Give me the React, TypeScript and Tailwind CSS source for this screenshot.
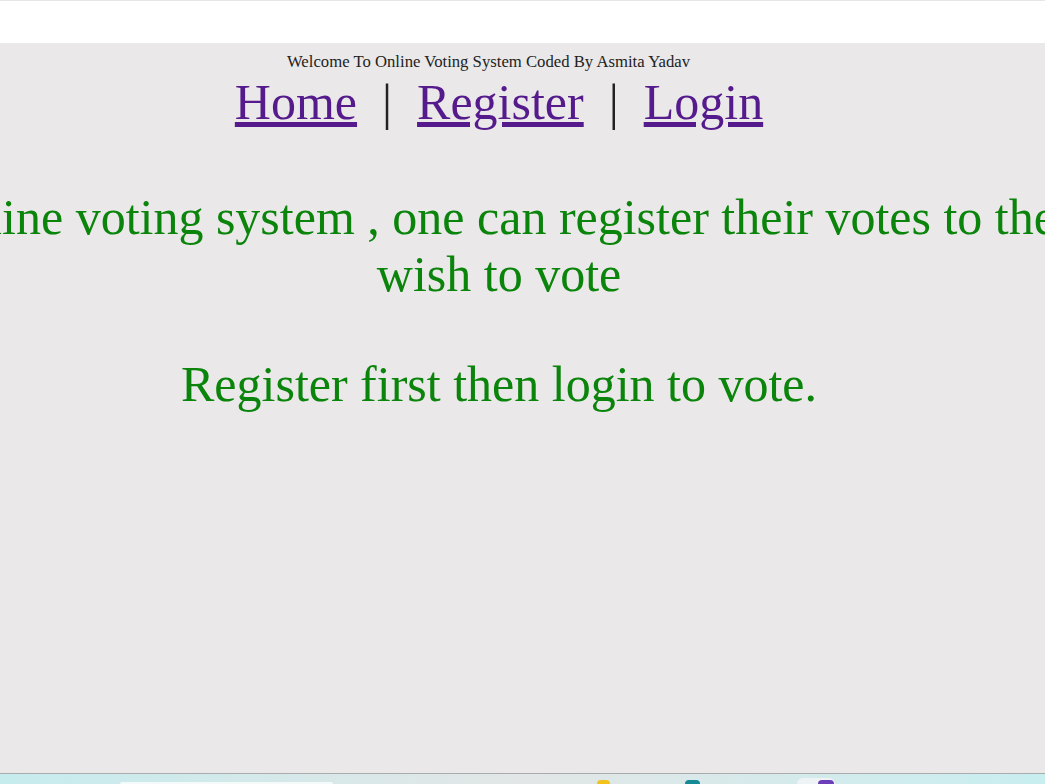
export default function App() {
  return (
    <div className="w-[1045px] h-[784px] overflow-hidden flex flex-col bg-white font-['Liberation_Serif',serif]">
      {/* browser chrome strip */}
      <div className="h-[43px] shrink-0 bg-white border-t border-[#e6e6e6]" />

      <main className="flex-1 bg-[#eae8e9] overflow-hidden">
        <div className="w-[998px]">
          <p className="mt-[10px] pr-[21px] text-center text-[16.7px] leading-[18px] text-[#222]">
            Welcome To Online Voting System Coded By Asmita Yadav
          </p>

          <nav className="mt-[3px] text-center text-[50px] leading-[57px] text-[#222]">
            <a href="#" className="text-[#551a8b] underline">Home</a>
            {"\u00a0 |\u00a0 "}
            <a href="#" className="text-[#551a8b] underline">Register</a>
            {"\u00a0 |\u00a0 "}
            <a href="#" className="text-[#551a8b] underline">Login</a>
          </nav>

          <div className="mt-[58px] text-[50px] leading-[57px] text-[#0b840b]">
            <p className="-ml-[116px] whitespace-nowrap">
              In online voting system , one can register their votes to them
            </p>
            <p className="text-center">wish to vote</p>
          </div>

          <p className="mt-[53px] text-center text-[50px] leading-[57px] text-[#0b840b]">
            Register first then login to vote.
          </p>
        </div>
      </main>

      {/* taskbar edge */}
      <div className="h-[11px] shrink-0 border-t border-[#a9abac] bg-gradient-to-r from-[#c6ecee] via-[#e2e6e6] to-[#c8eef0] flex items-end">
        <div className="ml-[120px] w-[213px] h-[2px] rounded-t-md bg-[#f4fafa]" />
        <div className="ml-[264px] w-[13px] h-[4px] rounded-t-full bg-[#f2c21b]" />
        <div className="ml-[75px] w-[15px] h-[4px] rounded-t-full bg-[#138a94]" />
        <div className="ml-[97px] w-[38px] h-[6px] rounded-t-md bg-[#eef4f6] flex items-end justify-center">
          <div className="ml-[20px] w-[16px] h-[4px] rounded-t-full bg-[#6c3fb8]" />
        </div>
      </div>
    </div>
  );
}
